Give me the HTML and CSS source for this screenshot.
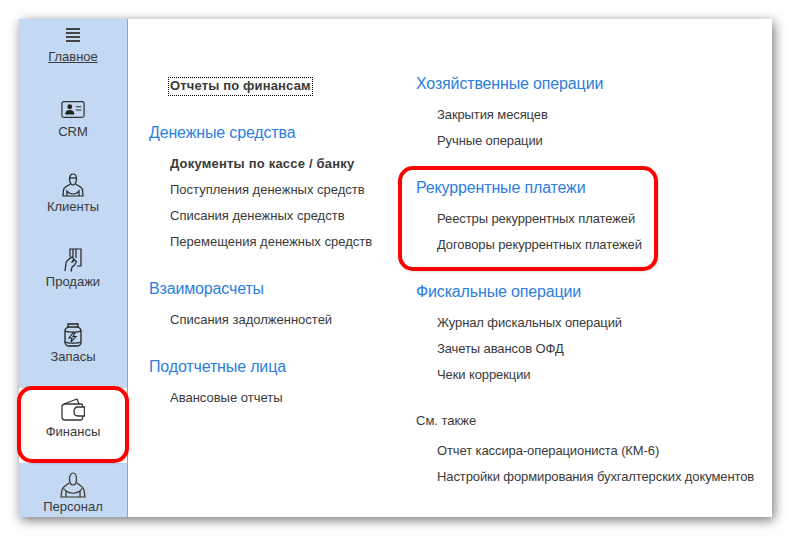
FILE: index.html
```html
<!DOCTYPE html>
<html lang="ru">

<head>
    <meta charset="utf-8">
    <title>Финансы</title>
    <link rel="stylesheet" href="styles.css">
</head>

<body>
    <div class="window">

        <!-- боковое меню -->
        <nav class="sidebar">
            <a class="side-item first">
                <svg class="icon burger" viewBox="0 0 14 14"><path d="M0 1h14M0 5h14M0 9h14M0 13h14"/></svg>
                <span class="underlined">Главное</span>
            </a>
            <a class="side-item">
                <svg class="icon" viewBox="0 0 26 20">
                    <rect x="1" y="1" width="24" height="17" rx="2" fill="none" stroke="#333" stroke-width="1.3"/>
                    <circle cx="9.5" cy="6.5" r="2.6" fill="#222"/>
                    <path d="M4.500 15c0-3.500 2-5 5-5s5 1.500 5 5z" fill="#222"/>
                    <path d="M16 6.500h6M16 10h6" stroke="#333" stroke-width="1.3"/>
                </svg>
                <span>CRM</span>
            </a>
            <a class="side-item">
                <svg class="icon" viewBox="0 0 24 24" fill="none" stroke="#222" stroke-width="1.200">
                    <path d="M8.500 6c0-3 1.500-5 3.500-5s3.500 2 3.500 5-1.500 6-3.500 6-3.500-3-3.500-6z"/>
                    <path d="M8.500 5h7"/>
                    <path d="M9 11c-1 2-6 2-6.500 6L2 23h20l-.5-6c-.5-4-5.500-4-6.500-6"/>
                    <path d="M6 23v-5c1.500 2 3.500 3 6 3s4.500-1 6-3v5"/>
                </svg>
                <span>Клиенты</span>
            </a>
            <a class="side-item">
                <svg class="icon" viewBox="0 0 24 24" fill="none" stroke="#222" stroke-width="1.200">
                    <path d="M9 9V1h11v17h-4"/>
                    <path d="M12 1v8M15 1v9"/>
                    <path d="M4 23l1-8c.3-2 3-4 6-6l2 2-2.500 3.500 3-2.500 2 1.500-2 3.500-2.500 2-1 4.500"/>
                </svg>
                <span>Продажи</span>
            </a>
            <a class="side-item">
                <svg class="icon" viewBox="0 0 24 24" fill="none" stroke="#222" stroke-width="1.300">
                    <path d="M7 1h10v3H7z"/>
                    <path d="M7 4C5 5 4 6.500 4 8v11c0 2.500 2 4 4 4h8c2 0 4-1.500 4-4V8c0-1.500-1-3-3-4"/>
                    <path d="M4 8c3 1.500 13 1.500 16 0M4 19c3 1.500 13 1.500 16 0"/>
                    <path d="M12 10l-4 5h3l-1 4 5-5.500h-3l2-3.500z" stroke-width="1.100"/>
                </svg>
                <span>Запасы</span>
            </a>
            <a class="side-item active">
                <svg class="icon" viewBox="0 0 24 24" fill="none" stroke="#333" stroke-width="1.300">
                    <path d="M1 9c0-2 1-3 3-3h16c1 0 1.500.5 1.500 1.500V9"/>
                    <path d="M1 9v10c0 2 1 3 3 3h16c1 0 1.500-.5 1.500-1.500V18"/>
                    <path d="M3 6l13-5 2 5"/>
                    <path d="M23.500 9H17c-2.500 0-4 2-4 4.500s1.500 4.500 4 4.500h6.500z"/>
                </svg>
                <span>Финансы</span>
                <i class="red-frame side-frame"></i>
            </a>
            <a class="side-item">
                <svg class="icon big" viewBox="0 0 26 26" fill="none" stroke="#3a3320" stroke-width="1.200">
                    <path d="M9.500 7c0-3.500 1.500-6 3.500-6s3.500 2.500 3.500 6-1.500 6-3.500 6-3.500-2.500-3.500-6z"/>
                    <path d="M9 11c-2 2-6 3-7 7l-1 7h24l-1-7c-1-4-5-5-7-7"/>
                    <path d="M6 25v-6c-1-2-2-2.500-3-2.500M20 25v-6c1-2 2-2.500 3-2.500"/>
                    <path d="M6 19c4 3 10 3 14 0"/>
                </svg>
                <span>Персонал</span>
            </a>
        </nav>

        <main class="content">
            <section class="column left">
                <div class="report-link"><b>Отчеты по финансам</b></div>

                <div class="group">
                    <h2>Денежные средства</h2>
                    <a class="item strong">Документы по кассе / банку</a>
                    <a class="item">Поступления денежных средств</a>
                    <a class="item">Списания денежных средств</a>
                    <a class="item">Перемещения денежных средств</a>
                </div>

                <div class="group">
                    <h2>Взаиморасчеты</h2>
                    <a class="item">Списания задолженностей</a>
                </div>

                <div class="group">
                    <h2>Подотчетные лица</h2>
                    <a class="item">Авансовые отчеты</a>
                </div>
            </section>

            <section class="column right">
                <div class="group">
                    <h2>Хозяйственные операции</h2>
                    <a class="item">Закрытия месяцев</a>
                    <a class="item">Ручные операции</a>
                </div>

                <div class="group">
                    <h2>Рекуррентные платежи</h2>
                    <a class="item">Реестры рекуррентных платежей</a>
                    <a class="item">Договоры рекуррентных платежей</a>
                    <i class="red-frame group-frame"></i>
                </div>

                <div class="group">
                    <h2>Фискальные операции</h2>
                    <a class="item">Журнал фискальных операций</a>
                    <a class="item">Зачеты авансов ОФД</a>
                    <a class="item">Чеки коррекции</a>
                </div>

                <div class="group see-also">
                    <h3>См. также</h3>
                    <a class="item">Отчет кассира-операциониста (КМ-6)</a>
                    <a class="item">Настройки формирования бухгалтерских документов</a>
                </div>
            </section>
        </main>
    </div>
</body>

</html>
```

FILE: styles.css
```css
* {
    box-sizing: border-box;
}

html,
body {
    margin: 0;
    height: 100%;
    background: #fff;
}

body {
    padding: 19px 20px 20px 19px;
    font-family: "Liberation Sans", Arial, sans-serif;
    font-size: 13px;
    color: #3a3a3a;
    overflow: hidden;
}

.window {
    display: flex;
    width: 753px;
    height: 498px;
    background: #fff;
    box-shadow: 2px 3px 11px rgba(0, 0, 0, 0.55);
}

/* боковое меню */
.sidebar {
    flex: none;
    width: 109px;
    background: #c3d8f3;
    border-right: 1px solid #9aa3ad;
}

.side-item {
    position: relative;
    display: flex;
    flex-direction: column;
    align-items: center;
    height: 75px;
    padding-top: 10px;
    line-height: 16px;
}

.side-item.first {
    height: 69px;
    padding-top: 9px;
}

.side-item.active {
    background: #fff;
}

.icon {
    display: block;
    flex: none;
    width: 24px;
    height: 24px;
    margin-bottom: 2px;
}

.icon.big {
    width: 26px;
    height: 26px;
    margin-top: -1px;
    margin-bottom: 1px;
}

.burger {
    width: 14px;
    height: 14px;
    margin-bottom: 7px;
    fill: none;
    stroke: #444;
    stroke-width: 2;
}

.underlined {
    text-decoration: underline;
}

/* красные рамки поверх */
.red-frame {
    position: absolute;
    border: 4px solid #f00;
    border-radius: 15px;
    box-shadow: 1px 1px 2px rgba(0, 0, 0, 0.12);
    pointer-events: none;
}

.side-frame {
    left: -2px;
    top: -2px;
    width: 112px;
    height: 77px;
}

.group-frame {
    left: -18px;
    top: -9px;
    width: 260px;
    height: 105px;
}

/* колонки */
.content {
    display: flex;
    flex: 1;
    padding: 54px 0 0 21px;
}

.column.left {
    width: 267px;
}

.column.right {
    flex: 1;
}

.report-link {
    margin-left: 21px;
    height: 26px;
    line-height: 26px;
}

.report-link b {
    display: inline-block;
    height: 19px;
    margin-left: -2px;
    padding: 0 2px;
    line-height: 18px;
    letter-spacing: 0.15px;
    outline: 1px dotted #000;
    outline-offset: -1px;
}

.column.left .report-link + .group {
    margin-top: 21px;
}

.group {
    position: relative;
    margin-bottom: 21px;
}

.column.right .group:first-child {
    margin-top: -2px;
}

.group.see-also {
    margin-top: -1px;
}

h2 {
    margin: 0;
    height: 31px;
    font-size: 16px;
    font-weight: normal;
    line-height: 26px;
    letter-spacing: -0.15px;
    color: #2c7ee0;
}

h3 {
    margin: 0;
    height: 30px;
    font-size: 13px;
    font-weight: normal;
    line-height: 26px;
}

.item {
    display: block;
    height: 26px;
    padding-left: 21px;
    line-height: 26px;
    white-space: nowrap;
}

.column.right .item {
    letter-spacing: -0.1px;
}

.item.strong {
    font-weight: bold;
    letter-spacing: 0.2px;
}
```
